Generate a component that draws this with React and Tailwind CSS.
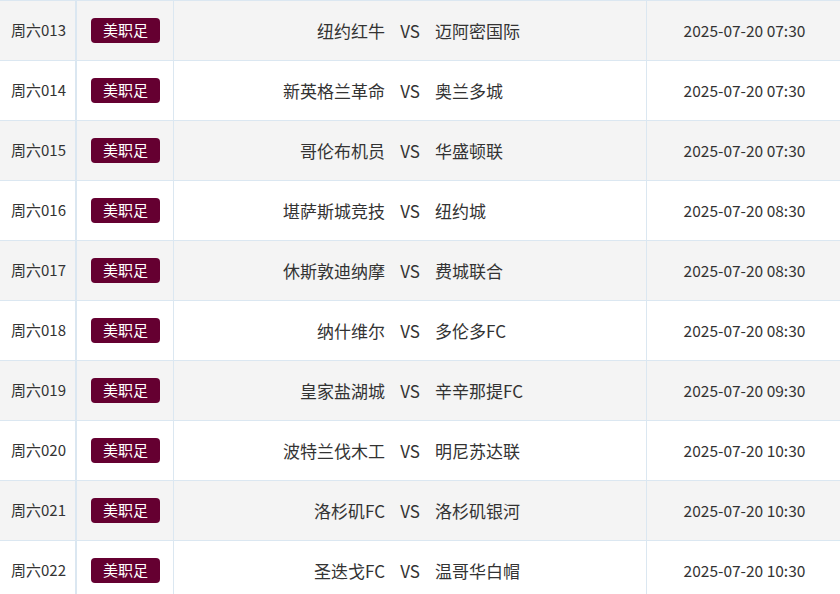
import React from "react";

const matches = [
  ["周六013", "纽约红牛", "迈阿密国际", "2025-07-20 07:30"],
  ["周六014", "新英格兰革命", "奥兰多城", "2025-07-20 07:30"],
  ["周六015", "哥伦布机员", "华盛顿联", "2025-07-20 07:30"],
  ["周六016", "堪萨斯城竞技", "纽约城", "2025-07-20 08:30"],
  ["周六017", "休斯敦迪纳摩", "费城联合", "2025-07-20 08:30"],
  ["周六018", "纳什维尔", "多伦多FC", "2025-07-20 08:30"],
  ["周六019", "皇家盐湖城", "辛辛那提FC", "2025-07-20 09:30"],
  ["周六020", "波特兰伐木工", "明尼苏达联", "2025-07-20 10:30"],
  ["周六021", "洛杉矶FC", "洛杉矶银河", "2025-07-20 10:30"],
  ["周六022", "圣迭戈FC", "温哥华白帽", "2025-07-20 10:30"],
];

function App() {
  return (
    <div
      className="w-[840px] h-[594px] overflow-hidden bg-white text-[#333]"
      style={{ fontFamily: '"Noto Sans CJK SC", "Noto Sans", sans-serif' }}
    >
      <div className="w-[842px] border-t border-[#dbe7f1]">
        {matches.map((m, i) => (
          <div
            key={m[0]}
            className={
              "flex h-[60px] border-b border-[#dbe7f1] " +
              (i % 2 === 0 ? "bg-[#f4f4f4]" : "bg-white")
            }
          >
            <div className="w-[77px] flex items-center pl-[11px] text-[15px] border-r-2 border-[#dbe7f1]">
              {m[0]}
            </div>
            <div className="w-[97px] flex items-center pl-[14px] border-r border-[#dbe7f1]">
              <span className="w-[69px] h-[25px] rounded-[4px] bg-[#650031] text-white text-[15px] flex items-center justify-center">
                美职足
              </span>
            </div>
            <div className="w-[473px] flex items-center text-[17px] border-r border-[#dbe7f1]">
              <span className="flex-1 text-right">{m[1]}</span>
              <span className="w-[50px] text-center">VS</span>
              <span className="flex-1 text-left">{m[2]}</span>
            </div>
            <div className="flex-1 flex items-center justify-center text-[15.5px]">
              {m[3]}
            </div>
          </div>
        ))}
      </div>
    </div>
  );
}

export default App;
